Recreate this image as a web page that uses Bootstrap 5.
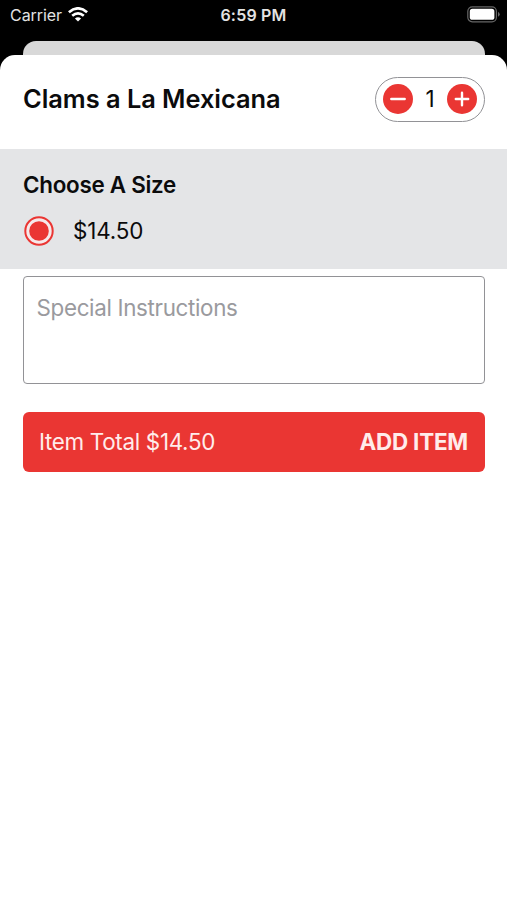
<!DOCTYPE html>
<html lang="en">
<head>
<meta charset="utf-8">
<meta name="viewport" content="width=device-width, initial-scale=1">
<title>Clams a La Mexicana</title>
<link href="https://cdn.jsdelivr.net/npm/bootstrap@5.3.0/dist/css/bootstrap.min.css" rel="stylesheet">
<style>
  :root { --brand: #ea3633; --outline: #929296; }
  body { font-family: Inter, "Liberation Sans", sans-serif; background: #000; color: #0b0b0c; height: 900px; overflow: hidden; font-size: 22.4px; line-height: 28px; }
  .status-bar { height: 41px; padding: 0 7px 12px 10px; color: #e3e3e3; font-size: 16px; line-height: 20px; }
  .status-bar > div { flex: 1 1 0; }
  .clock { font-weight: 600; letter-spacing: .2px; margin-right: 3px; }
  .carrier { letter-spacing: -.05px; }
  .wifi { margin-left: 6px; }
  .sheet-behind { height: 14px; margin: 0 22px 0 23px; background: #d8d8d8; border-radius: 13px 13px 0 0; }
  .sheet { border-radius: 15px 15px 0 0; }
  .sheet-head { height: 94px; padding: 0 22px 6px 23px; }
  .dish { font-size: 25.4px; font-weight: 600; line-height: 32px; letter-spacing: -.03px; }
  .stepper { width: 110px; height: 45px; border: 1.5px solid var(--outline); padding: 0 7px; }
  .step-btn { width: 30px; height: 30px; background: var(--brand); }
  .sizes { height: 120px; background: #e4e5e7; padding: 22px 23px 0; }
  .sizes h2 { font-size: 22.4px; font-weight: 600; line-height: 28px; letter-spacing: -.27px; }
  .size-option { margin-top: 17px; gap: 19px; padding-left: 1px; }
  .size-radio { width: 30px; height: 30px; }
  .price { letter-spacing: -.15px; }
  .order { padding: 7px 22px 0 23px; }
  .order .form-control { height: 108px; border: 1.5px solid var(--outline); border-radius: 4px; padding: 17px 12.5px; font-size: 22.4px; line-height: 28px; letter-spacing: -.33px; resize: none; }
  .order .form-control::placeholder { color: #9a9a9e; }
  .add-btn { margin-top: 28px; height: 60px; background: var(--brand); border-radius: 6px; padding: 0 17px 0 16px; font-size: 22.4px; color: #ffeceb; }
  .add-btn:hover { background: var(--brand); color: #ffeceb; }
  .total { letter-spacing: -.31px; }
  .cta { letter-spacing: -.2px; }
</style>
</head>
<body class="d-flex flex-column">
  <header class="status-bar d-flex align-items-center">
    <div class="d-flex align-items-center">
      <span class="carrier">Carrier</span>
      <svg class="wifi" width="20" height="15" viewBox="0 0 20 15" fill="none" stroke="#fff" stroke-width="2.7" aria-label="Wi-Fi"><path d="M.9 5.2Q10-2.5 19.1 5.2M4.2 8.8Q10 3.9 15.8 8.8"/><path d="M10 14.6 6.9 11.6Q10 9 13.1 11.6Z" fill="#fff" stroke="none"/></svg>
    </div>
    <span class="clock">6:59 PM</span>
    <div class="d-flex justify-content-end">
      <svg width="33" height="17" viewBox="0 0 33 17" aria-label="Battery full"><rect x=".8" y=".8" width="28.6" height="15" rx="4.5" fill="none" stroke="#666" stroke-width="1.2"/><rect x="2.8" y="2.8" width="24.6" height="11" rx="2.6" fill="#fff"/><path d="M31 5.8q1.7 1 1.7 2.5T31 10.8z" fill="#666"/></svg>
    </div>
  </header>
  <div class="sheet-behind"></div>
  <main class="sheet bg-white flex-grow-1">
    <div class="sheet-head d-flex justify-content-between align-items-center">
      <h1 class="dish mb-0">Clams a La Mexicana</h1>
      <div class="stepper rounded-pill d-flex align-items-center justify-content-between">
        <button class="step-btn btn border-0 p-0 rounded-circle d-flex" type="button" aria-label="Decrease"><svg width="30" height="30" viewBox="0 0 30 30" stroke="#fff" stroke-width="2.4" stroke-linecap="round"><path d="M8.3 15h13.4"/></svg></button>
        <span>1</span>
        <button class="step-btn btn border-0 p-0 rounded-circle d-flex" type="button" aria-label="Increase"><svg width="30" height="30" viewBox="0 0 30 30" stroke="#fff" stroke-width="2.4" stroke-linecap="round"><path d="M8.8 15h12.4M15 8.8v12.4"/></svg></button>
      </div>
    </div>
    <section class="sizes">
      <h2 class="mb-0">Choose A Size</h2>
      <div class="size-option d-flex align-items-center">
        <svg class="size-radio" viewBox="0 0 30 30"><circle cx="15" cy="15" r="13.7" fill="#f6e9ea" stroke="#ea3633" stroke-width="2"/><circle cx="15" cy="15" r="9.8" fill="#ea3633"/></svg>
        <span class="price">$14.50</span>
      </div>
    </section>
    <section class="order">
      <textarea class="form-control shadow-none" placeholder="Special Instructions" aria-label="Special Instructions"></textarea>
      <button class="add-btn btn border-0 w-100 d-flex justify-content-between align-items-center" type="button">
        <span class="total">Item Total $14.50</span>
        <span class="cta fw-bold">ADD ITEM</span>
      </button>
    </section>
  </main>
<script src="https://cdn.jsdelivr.net/npm/bootstrap@5.3.0/dist/js/bootstrap.bundle.min.js"></script>
</body>
</html>
